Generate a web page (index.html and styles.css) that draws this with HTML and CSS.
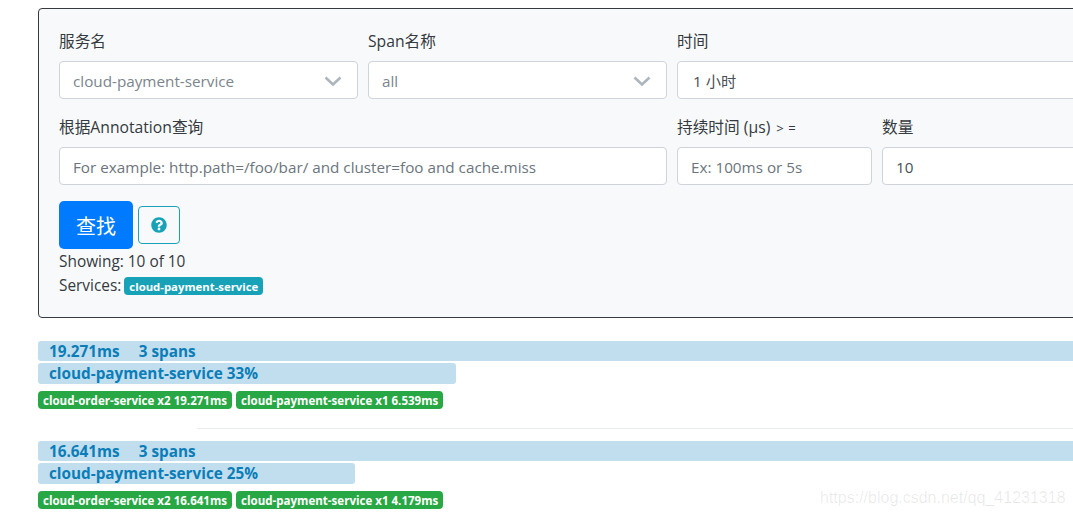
FILE: index.html
```html
<!DOCTYPE html>
<html lang="zh">
<head>
  <meta charset="UTF-8" />
  <title>Zipkin</title>
  <link rel="stylesheet" href="styles.css">
</head>
<body>
  <div class="page">
    <form class="search-card">
      <div class="form-row">
        <div class="field col-third">
          <label>服务名</label>
          <div class="control select">cloud-payment-service
            <svg class="chevron" viewBox="0 0 18 10"><path d="M1.5 1.5 9 8.5l7.5-7"/></svg>
          </div>
        </div>
        <div class="field col-third">
          <label>Span名称</label>
          <div class="control select">all
            <svg class="chevron" viewBox="0 0 18 10"><path d="M1.5 1.5 9 8.5l7.5-7"/></svg>
          </div>
        </div>
        <div class="field col-rest">
          <label>时间</label>
          <div class="control time">1 小时</div>
        </div>
      </div>
      <div class="form-row">
        <div class="field col-query">
          <label>根据Annotation查询</label>
          <div class="control placeholder">For example: http.path=/foo/bar/ and cluster=foo and cache.miss</div>
        </div>
        <div class="field col-duration">
          <label>持续时间 (μs) <span class="gte">&gt; =</span></label>
          <div class="control placeholder">Ex: 100ms or 5s</div>
        </div>
        <div class="field col-rest">
          <label>数量</label>
          <div class="control value">10</div>
        </div>
      </div>
      <div class="actions">
        <button type="button" class="btn-find">查找</button>
        <button type="button" class="btn-help" aria-label="help">
          <svg viewBox="0 0 512 512"><path d="M504 256c0 136.997-111.043 248-248 248S8 392.997 8 256C8 119.083 119.043 8 256 8s248 111.083 248 248zM262.655 90c-54.497 0-89.255 22.957-116.549 63.758-3.536 5.286-2.353 12.415 2.715 16.258l34.699 26.31c5.205 3.947 12.621 3.008 16.665-2.122 17.864-22.658 30.113-35.797 57.303-35.797 20.429 0 45.698 13.148 45.698 32.958 0 14.976-12.363 22.667-32.534 33.976C247.128 238.528 216 254.941 216 296v4c0 6.627 5.373 12 12 12h56c6.627 0 12-5.373 12-12v-1.333c0-28.462 83.186-29.647 83.186-106.667 0-58.002-60.165-102-116.531-102zM256 338c-25.365 0-46 20.635-46 46 0 25.364 20.635 46 46 46s46-20.636 46-46c0-25.365-20.635-46-46-46z"/></svg>
        </button>
      </div>
      <div class="summary">Showing: 10 of 10</div>
      <div class="summary">Services: <span class="badge badge-info">cloud-payment-service</span></div>
    </form>

    <div class="trace">
      <div class="bar bar-full"><span>19.271ms</span><span class="spans">3 spans</span></div>
      <div class="bar bar-service" style="width: 418px">cloud-payment-service 33%</div>
      <div class="badges">
        <span class="badge badge-ok">cloud-order-service x2 19.271ms</span>
        <span class="badge badge-ok">cloud-payment-service x1 6.539ms</span>
      </div>
    </div>
    <hr class="divider">
    <div class="trace">
      <div class="bar bar-full"><span>16.641ms</span><span class="spans">3 spans</span></div>
      <div class="bar bar-service" style="width: 317px">cloud-payment-service 25%</div>
      <div class="badges">
        <span class="badge badge-ok">cloud-order-service x2 16.641ms</span>
        <span class="badge badge-ok">cloud-payment-service x1 4.179ms</span>
      </div>
    </div>
  </div>
  <div class="watermark">https://blog.csdn.net/qq_41231318</div>
</body>
</html>
```

FILE: styles.css
```css
html, body {
  margin: 0;
  height: 100%;
  overflow: hidden;
  background: #fff;
}
body {
  font-family: "Open Sans", "Noto Sans CJK SC", sans-serif;
  font-size: 15.4px;
  color: #343a40;
}
.page {
  width: 1045px;
  margin-left: 38px;
  padding-top: 8px;
}
.search-card {
  height: 310px;
  box-sizing: border-box;
  padding: 20px 0 20px 20px;
  background: #f8f9fa;
  border: 1px solid #343a40;
  border-radius: 4px;
}
.form-row {
  display: flex;
  gap: 10px;
  margin-bottom: 16px;
}
.field label {
  display: block;
  height: 24px;
  line-height: 24px;
  margin-bottom: 8px;
  font-size: 15.7px;
}
.gte {
  font-size: 13px;
  letter-spacing: 0.5px;
  margin-left: 2px;
}
.col-third { width: 299px; flex: none; }
.col-query { width: 608px; flex: none; }
.col-duration { width: 195px; flex: none; }
.col-rest { flex: 1; }
.control {
  position: relative;
  box-sizing: border-box;
  height: 38px;
  line-height: 39px;
  padding: 0 13px;
  background: #fff;
  border: 1px solid #ced4da;
  border-radius: 4px;
  color: #495057;
  font-size: 15.25px;
  white-space: nowrap;
}
.placeholder { color: #6c757d; }
.select { color: #7b858d; }
.time { padding-left: 15px; }
.chevron {
  position: absolute;
  right: 15px;
  top: 14px;
  width: 18px;
  height: 10px;
  fill: none;
  stroke: #adb5bd;
  stroke-width: 2.6;
}
.actions {
  display: flex;
  align-items: center;
  gap: 5px;
}
.btn-find {
  width: 74px;
  height: 48px;
  background: #007bff;
  border: 0;
  border-radius: 5px;
  color: #fff;
  font-family: inherit;
  font-size: 20px;
}
.btn-help {
  display: flex;
  align-items: center;
  justify-content: center;
  width: 42px;
  height: 38px;
  padding: 0;
  background: transparent;
  border: 1px solid #17a2b8;
  border-radius: 4px;
}
.btn-help svg {
  width: 16px;
  height: 16px;
  fill: #17a2b8;
}
.summary {
  height: 24px;
  line-height: 26px;
}
.badge {
  display: inline-block;
  height: 18px;
  line-height: 19px;
  padding: 0 5px;
  border-radius: 4px;
  color: #fff;
  font-weight: 700;
  white-space: nowrap;
}
.badge-info {
  margin-left: -1px;
  background: #17a2b8;
  font-size: 11.35px;
}
.badge-ok {
  background: #28a745;
  font-size: 11.55px;
}
.trace {
  margin-top: 23px;
}
.bar {
  box-sizing: border-box;
  padding-left: 11px;
  background: #c1deef;
  border-radius: 3px;
  color: #0b7db8;
  font-size: 15.3px;
  font-weight: 700;
  white-space: nowrap;
}
.bar-full {
  height: 20px;
  line-height: 21px;
}
.bar-service {
  height: 21px;
  line-height: 21px;
  margin-top: 2px;
}
.spans { margin-left: 19px; }
.badges {
  display: flex;
  gap: 4px;
  margin-top: 7px;
}
.divider {
  margin: 19px 0 -11px 159px;
  border: 0;
  border-top: 1px solid #e9ecef;
}
.watermark {
  position: absolute;
  left: 820px;
  top: 489px;
  font-family: "Liberation Sans", sans-serif;
  font-size: 16px;
  color: rgba(0, 0, 0, 0.09);
}
```
